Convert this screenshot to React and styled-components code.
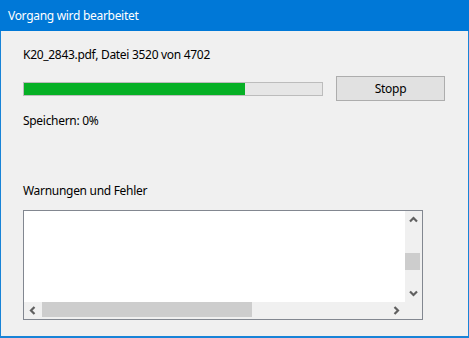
import React from "react";
import styled, { createGlobalStyle } from "styled-components";

const GlobalStyle = createGlobalStyle`
  html, body {
    margin: 0;
    padding: 0;
    background: #f0f0f0;
  }
  body {
    font-family: "Noto Sans", "Liberation Sans", sans-serif;
    font-size: 12px;
    letter-spacing: -0.3px;
    color: #000;
  }
`;

function Chevron({ dir }) {
  const rot = { up: 0, right: 90, down: 180, left: 270 }[dir];
  return (
    <svg width="9" height="9" viewBox="0 0 9 9" style={{ transform: `rotate(${rot}deg)` }}>
      <path d="M1 6.5 L4.5 3 L8 6.5" fill="none" stroke="#606060" strokeWidth="2.2" />
    </svg>
  );
}

export default function App() {
  return (
    <>
      <GlobalStyle />
      <Window>
        <TitleBar>Vorgang wird bearbeitet</TitleBar>
        <Body>
          <Label>K20_2843.pdf, Datei 3520 von 4702</Label>
          <ProgressRow>
            <ProgressTrack>
              <ProgressFill value={74} />
            </ProgressTrack>
            <Button>Stopp</Button>
          </ProgressRow>
          <Label top={12}>Speichern: 0%</Label>
          <Label top={54}>Warnungen und Fehler</Label>
          <LogBox>
            <LogContent />
            <VScroll>
              <ArrowBtn><Chevron dir="up" /></ArrowBtn>
              <VTrack>
                <VThumb />
              </VTrack>
              <ArrowBtn><Chevron dir="down" /></ArrowBtn>
            </VScroll>
            <HScroll>
              <ArrowBtn><Chevron dir="left" /></ArrowBtn>
              <HTrack>
                <HThumb />
              </HTrack>
              <ArrowBtn><Chevron dir="right" /></ArrowBtn>
            </HScroll>
            <Corner />
          </LogBox>
        </Body>
      </Window>
    </>
  );
}

const Window = styled.div`
  width: 469px;
  height: 338px;
  box-sizing: border-box;
  border: 1px solid #1883d7;
  border-width: 0 1px 2px 1px;
  display: flex;
  flex-direction: column;
  background: #f0f0f0;
`;

const TitleBar = styled.div`
  height: 31px;
  margin: 0 -1px;
  padding-left: 8px;
  background: #0078d7;
  color: #fff;
  display: flex;
  align-items: center;
  line-height: 16px;
`;

const Body = styled.div`
  padding: 16px 0 0 22px;
  display: flex;
  flex-direction: column;
`;

const Label = styled.div`
  line-height: 16px;
  margin-top: ${(p) => p.top || 0}px;
`;

const ProgressRow = styled.div`
  margin-top: 13px;
  display: flex;
  align-items: center;
  gap: 13px;
`;

const ProgressTrack = styled.div`
  width: 300px;
  height: 14px;
  box-sizing: border-box;
  border: 1px solid #bcbcbc;
  background: #e6e6e6;
`;

const ProgressFill = styled.div`
  height: 100%;
  width: ${(p) => p.value}%;
  background: #06b025;
`;

const Button = styled.div`
  width: 109px;
  height: 25px;
  box-sizing: border-box;
  border: 1px solid #adadad;
  background: #e1e1e1;
  display: flex;
  align-items: center;
  justify-content: center;
`;

const LogBox = styled.div`
  margin-top: 11px;
  width: 400px;
  height: 110px;
  box-sizing: border-box;
  border: 1px solid #828790;
  display: grid;
  grid-template-columns: 1fr 17px;
  grid-template-rows: 1fr 17px;
`;

const LogContent = styled.div`
  background: #fff;
`;

const VScroll = styled.div`
  background: #f0f0f0;
  display: flex;
  flex-direction: column;
`;

const HScroll = styled.div`
  background: #f0f0f0;
  display: flex;
`;

const Corner = styled.div`
  background: #f0f0f0;
`;

const ArrowBtn = styled.div`
  width: 17px;
  height: 17px;
  flex: none;
  display: flex;
  align-items: center;
  justify-content: center;
`;

const VTrack = styled.div`
  flex: 1;
  padding-top: 25px;
`;

const VThumb = styled.div`
  height: 17px;
  width: 15px;
  background: #cdcdcd;
`;

const HTrack = styled.div`
  flex: 1;
  padding-left: 1px;
`;

const HThumb = styled.div`
  width: 210px;
  height: 15px;
  background: #cdcdcd;
`;
